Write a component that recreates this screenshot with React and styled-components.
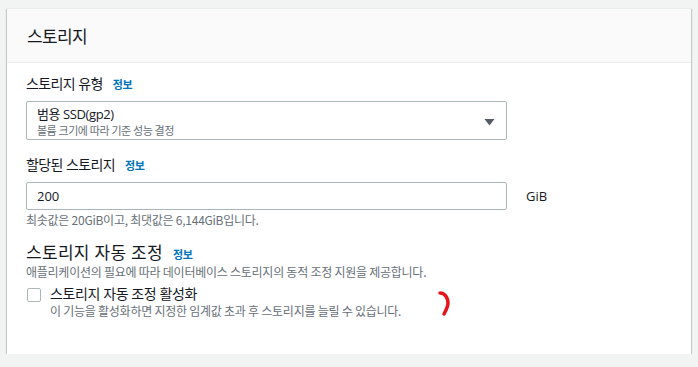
import React from "react";
import styled, { createGlobalStyle } from "styled-components";

const GlobalStyle = createGlobalStyle`
  html, body { margin: 0; padding: 0; }
  body {
    background: #f2f3f3;
    font-family: "Open Sans", "Noto Sans CJK KR", sans-serif;
    color: #16191f;
  }
`;

const Page = styled.div`
  padding: 8px 7px 0 7px;
`;

const Card = styled.section`
  position: relative;
  background: #ffffff;
  box-shadow: 0 1px 1px 0 rgba(0, 28, 36, 0.3), 1px 1px 1px 0 rgba(0, 28, 36, 0.15),
    -1px 1px 1px 0 rgba(0, 28, 36, 0.15);
  border-top: 1px solid #eaeded;
`;

const Header = styled.header`
  height: 53px;
  display: flex;
  align-items: center;
  padding: 0 20px;
  background: #fafafa;
  border-bottom: 1px solid #eaeded;
`;

const Title = styled.h2`
  margin: 0;
  font-size: 17px;
  font-weight: 400;
  letter-spacing: -0.6px;
`;

const Body = styled.div`
  padding: 10px 20px 35px 19px;
  display: flex;
  flex-direction: column;
`;

const Field = styled.div`
  display: flex;
  flex-direction: column;
  margin-bottom: ${(p) => p.$mb || 0}px;
`;

const LabelRow = styled.div`
  display: flex;
  align-items: baseline;
  gap: 10px;
  height: 22px;
  line-height: 22px;
  margin-bottom: ${(p) => p.$mb || 0}px;
`;

const Label = styled.span`
  font-size: 14px;
  letter-spacing: -0.6px;
  color: #16191f;
`;

const SectionLabel = styled.span`
  font-size: 17px;
  letter-spacing: 0.3px;
  color: #16191f;
`;

const Info = styled.a`
  font-size: 11px;
  font-weight: 700;
  color: #0073bb;
  text-decoration: none;
  letter-spacing: -0.4px;
`;

const SelectBox = styled.div`
  width: 481px;
  height: 39px;
  box-sizing: border-box;
  border: 1px solid #aab7b8;
  border-radius: 2px;
  padding: 2px 11px 0 10px;
  display: flex;
  align-items: center;
  justify-content: space-between;
`;

const SelectText = styled.div`
  display: flex;
  flex-direction: column;
`;

const MainText = styled.span`
  font-size: 13px;
  line-height: 17px;
  letter-spacing: -0.4px;
  color: #16191f;
`;

const SubText = styled.span`
  font-size: 11px;
  line-height: 15px;
  letter-spacing: -0.5px;
  color: #687078;
`;

const InputRow = styled.div`
  display: flex;
  align-items: center;
  gap: 19px;
`;

const Input = styled.div`
  width: 481px;
  height: 28px;
  box-sizing: border-box;
  border: 1px solid #aab7b8;
  border-radius: 2px;
  padding: 0 10px;
  display: flex;
  align-items: center;
  font-size: 13px;
  color: #16191f;
`;

const Unit = styled.span`
  font-size: 13px;
  color: #16191f;
  margin-bottom: 1px;
`;

const Hint = styled.div`
  font-family: "Noto Sans CJK KR", sans-serif;
  font-size: 12px;
  line-height: 16px;
  letter-spacing: -0.25px;
  color: #687078;
  margin-top: ${(p) => p.$mt || 0}px;
`;

const CheckRow = styled.div`
  display: flex;
  align-items: flex-start;
  gap: 9px;
  margin-top: 4px;
  padding-left: 1px;
`;

const CheckBox = styled.span`
  width: 12px;
  height: 12px;
  margin-top: 4px;
  border: 1px solid #aab7b8;
  border-radius: 2px;
  background: #fff;
  flex: none;
`;

const CheckText = styled.div`
  display: flex;
  flex-direction: column;
`;

const CheckLabel = styled.span`
  font-size: 14px;
  line-height: 19px;
  letter-spacing: -0.4px;
  color: #16191f;
`;

const Mark = styled.svg`
  position: absolute;
  left: 429px;
  top: 281px;
`;

function Caret() {
  return (
    <svg width="11" height="8" viewBox="0 0 11 8">
      <path d="M0.5 1 L10.5 1 L5.5 7.5 Z" fill="#545b64" />
    </svg>
  );
}

export default function App() {
  return (
    <>
      <GlobalStyle />
      <Page>
        <Card>
          <Header>
            <Title>스토리지</Title>
          </Header>
          <Body>
            <Field $mb={14}>
              <LabelRow $mb={6}>
                <Label>스토리지 유형</Label>
                <Info>정보</Info>
              </LabelRow>
              <SelectBox>
                <SelectText>
                  <MainText>범용 SSD(gp2)</MainText>
                  <SubText>볼륨 크기에 따라 기준 성능 결정</SubText>
                </SelectText>
                <Caret />
              </SelectBox>
            </Field>
            <Field $mb={14}>
              <LabelRow $mb={6}>
                <Label>할당된 스토리지</Label>
                <Info>정보</Info>
              </LabelRow>
              <InputRow>
                <Input>200</Input>
                <Unit>GiB</Unit>
              </InputRow>
              <Hint $mt={2}>최솟값은 20GiB이고, 최댓값은 6,144GiB입니다.</Hint>
            </Field>
            <Field>
              <LabelRow $mb={0}>
                <SectionLabel>스토리지 자동 조정</SectionLabel>
                <Info>정보</Info>
              </LabelRow>
              <Hint>애플리케이션의 필요에 따라 데이터베이스 스토리지의 동적 조정 지원을 제공합니다.</Hint>
              <CheckRow>
                <CheckBox />
                <CheckText>
                  <CheckLabel>스토리지 자동 조정 활성화</CheckLabel>
                  <Hint>이 기능을 활성화하면 지정한 임계값 초과 후 스토리지를 늘릴 수 있습니다.</Hint>
                </CheckText>
              </CheckRow>
            </Field>
          </Body>
          <Mark width="20" height="30" viewBox="0 0 20 30">
            <path
              d="M4 3 C9 3 12 8 12 13 C12 17 10 20 8 24"
              fill="none"
              stroke="#e8141c"
              strokeWidth="3.5"
              strokeLinecap="round"
            />
          </Mark>
        </Card>
      </Page>
    </>
  );
}
